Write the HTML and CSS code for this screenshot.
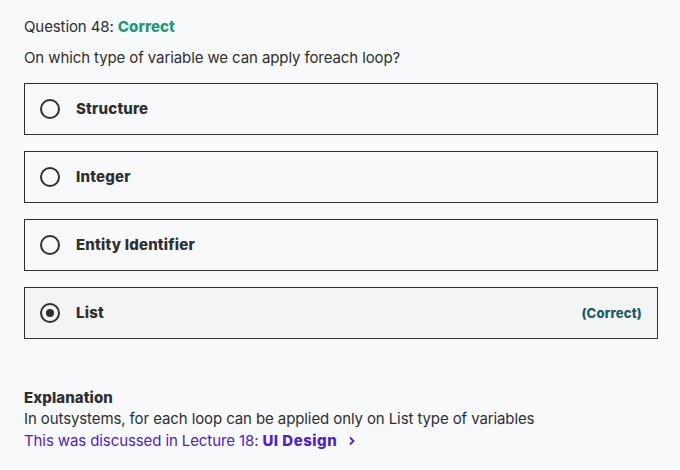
FILE: index.html
```html
<!DOCTYPE html>
<html>
<head>
<meta charset="utf-8">
<link rel="stylesheet" href="styles.css">
</head>
<body>
<div class="page">
  <div class="title">Question 48: <span class="ok">Correct</span></div>
  <div class="question">On which type of variable we can apply foreach loop?</div>
  <div class="options">
    <div class="opt"><span class="radio"></span><span class="label">Structure</span></div>
    <div class="opt"><span class="radio"></span><span class="label">Integer</span></div>
    <div class="opt"><span class="radio"></span><span class="label">Entity Identifier</span></div>
    <div class="opt selected"><span class="radio on"></span><span class="label">List</span><span class="tag">(Correct)</span></div>
  </div>
  <div class="expl">
    <div class="expl-h">Explanation</div>
    <div class="expl-t">In outsystems, for each loop can be applied only on List type of variables</div>
    <div class="lec">This was discussed in Lecture 18: <b>UI Design</b>
      <svg class="chev" width="10" height="10" viewBox="0 0 10 10"><path d="M3 1.5 L6.5 5 L3 8.5" fill="none" stroke="#5022c3" stroke-width="1.8"/></svg>
    </div>
  </div>
</div>
</body>
</html>
```
FILE: styles.css
```css
html, body { margin: 0; padding: 0; }
body {
  background: #f7f9fa;
  color: #2d2f31;
  font-family: "Inter", "Liberation Sans", sans-serif;
  font-size: 15px;
  letter-spacing: -0.1px;
}
.page { padding: 17px 22px 0 24px; }
.title { line-height: 20px; }
.ok { color: #1e9c78; font-weight: 800; letter-spacing: 0.1px; }
.question { margin-top: 11px; line-height: 20px; }
.options { margin-top: 15px; display: flex; flex-direction: column; gap: 16px; }
.opt {
  box-sizing: border-box;
  height: 52px;
  border: 1px solid #2d2f31;
  display: flex;
  align-items: center;
  padding: 0 15px 1px;
}
.opt.selected { background: #f2f5f4; }
.radio {
  width: 16px; height: 16px;
  border: 2px solid #2d2f31;
  border-radius: 50%;
  box-sizing: content-box;
  display: flex; align-items: center; justify-content: center;
  flex: none;
}
.radio.on::after {
  content: "";
  width: 8px; height: 8px; border-radius: 50%; background: #2d2f31;
}
.label { margin-left: 16px; font-weight: 800; letter-spacing: 0.2px; }
.tag { margin-left: auto; font-weight: 800; color: #1c5a6a; font-size: 13px; letter-spacing: 0.2px; }
.expl { margin-top: 48px; line-height: 21px; }
.expl-h { font-weight: 800; letter-spacing: 0.1px; }
.lec { color: #5022c3; display: flex; align-items: center; margin-top: 1px; }
.lec b { margin-left: 4px; font-weight: 800; letter-spacing: 0.5px; }
.chev { margin-left: 10px; }
```
